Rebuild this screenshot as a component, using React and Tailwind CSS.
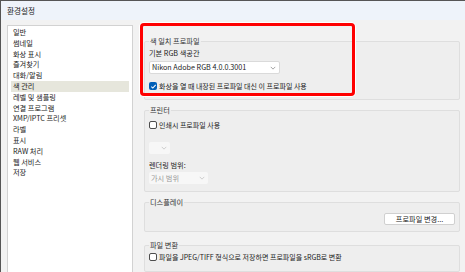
import React from 'react'

const font = { fontFamily: '"Noto Sans CJK KR", "Noto Sans", sans-serif' }

const menu = [
  '일반',
  '썸네일',
  '화상 표시',
  '즐겨찾기',
  '대화/알림',
  '색 관리',
  '레벨 및 샘플링',
  '연결 프로그램',
  'XMP/IPTC 프리셋',
  '라벨',
  '표시',
  'RAW 처리',
  '웹 서비스',
  '저장',
]

const Chevron = ({ className }) => (
  <svg viewBox="0 0 8 5" className={className} fill="none" stroke="currentColor" strokeWidth="0.9">
    <path d="M1 1l3 3 3-3" />
  </svg>
)

const Check = ({ checked, label }) => (
  <div className="flex items-center h-[10px] leading-[10px]">
    {checked ? (
      <span className="w-[8px] h-[8px] rounded-[2px] bg-[#005fb8] flex items-center justify-center">
        <svg viewBox="0 0 8 8" className="w-[7px] h-[7px]" fill="none" stroke="white" strokeWidth="1.2">
          <path d="M1.5 4.2l1.7 1.6 3.3-3.6" />
        </svg>
      </span>
    ) : (
      <span className="w-[8px] h-[8px] rounded-[2px] border border-[#4d4d4d] bg-white" />
    )}
    <span className="ml-[2px] text-[7px] text-[#1b1b1b] whitespace-nowrap">{label}</span>
  </div>
)

const Group = ({ title, className, children }) => (
  <fieldset className={`border border-[#dedede] bg-[#eeeeee] rounded-[2px] px-[4px] flex flex-col ${className}`}>
    <legend className="px-[1px] text-[7.2px] leading-[10px] text-[#333]">{title}</legend>
    {children}
  </fieldset>
)

export default function App() {
  return (
    <div className="relative w-[465px] h-[272px] overflow-hidden bg-[#f2f2f2] border-l border-t border-[#555]" style={font}>
      {/* 제목 표시줄 */}
      <div className="h-[19px] bg-[#eef3fa] flex items-center pl-[6px] text-[7.6px] text-[#1b1b1b]">
        환경설정
      </div>

      <div className="flex pl-[6px] pt-[5px] h-[252px]">
        {/* 왼쪽 메뉴 */}
        <div className="w-[126px] h-[260px] bg-white border border-[#d2d2d2] pt-[1px] px-[3px]">
          {menu.map((m) => (
            <div
              key={m}
              className={`h-[10.8px] leading-[10.8px] pl-[2px] text-[7.2px] text-[#1b1b1b] whitespace-nowrap ${
                m === '색 관리' ? 'bg-[#e6e6dc]' : ''
              }`}
            >
              {m}
            </div>
          ))}
        </div>

        {/* 오른쪽 설정 */}
        <div className="ml-[11px] w-[316px] mt-[11px] flex flex-col">
          <Group title="색 일치 프로파일" className="pb-[8px]">
            <div className="mt-[2px] text-[7.2px] leading-[10px] text-[#1b1b1b]">기본 RGB 색공간</div>
            <div className="mt-[3px] w-[131px] h-[13px] bg-white border border-[#dadada] rounded-[2px] flex items-center justify-between pl-[2px] pr-[3px]">
              <span className="text-[7.2px] text-[#1b1b1b] whitespace-nowrap">Nikon Adobe RGB 4.0.0.3001</span>
              <Chevron className="w-[6px] h-[4px] text-[#777]" />
            </div>
            <div className="mt-[7px]">
              <Check checked label="화상을 열 때 내장된 프로파일 대신 이 프로파일 사용" />
            </div>
          </Group>

          <Group title="프린터" className="mt-[5px] pb-[7px]">
            <div className="mt-[5px]">
              <Check label="인쇄시 프로파일 사용" />
            </div>
            <div className="mt-[12px] w-[21px] h-[12px] bg-[#f7f7f7] rounded-[2px] flex items-center justify-end pr-[3px]">
              <Chevron className="w-[6px] h-[4px] text-[#bbb]" />
            </div>
            <div className="mt-[6px] text-[7.2px] leading-[10px] text-[#1b1b1b]">렌더링 범위:</div>
            <div className="mt-[2px] w-[59px] h-[12px] bg-[#f7f7f7] rounded-[2px] flex items-center justify-between pl-[2px] pr-[3px]">
              <span className="text-[7.2px] text-[#9a9a9a] whitespace-nowrap">가시 범위</span>
              <Chevron className="w-[6px] h-[4px] text-[#bbb]" />
            </div>
          </Group>

          <Group title="디스플레이" className="mt-[5px] pb-[6px]">
            <button className="mt-[6px] self-end w-[71px] h-[12px] bg-white border border-[#d0d0d0] rounded-[2px] text-[7.2px] leading-[10px] text-[#1b1b1b] flex items-center justify-center">
              프로파일 변경...
            </button>
          </Group>

          <Group title="파일 변환" className="mt-[8px] pb-[9px]">
            <div className="mt-[2px]">
              <Check label="파일을 JPEG/TIFF 형식으로 저장하면 프로파일을 sRGB로 변환" />
            </div>
          </Group>
        </div>
      </div>

      {/* 강조 표시 */}
      <div className="absolute left-[139px] top-[22px] w-[215px] h-[73px] border-[3px] border-[#ff0000] rounded-[4px] shadow-[0_0_0_1px_white]" />
    </div>
  )
}
